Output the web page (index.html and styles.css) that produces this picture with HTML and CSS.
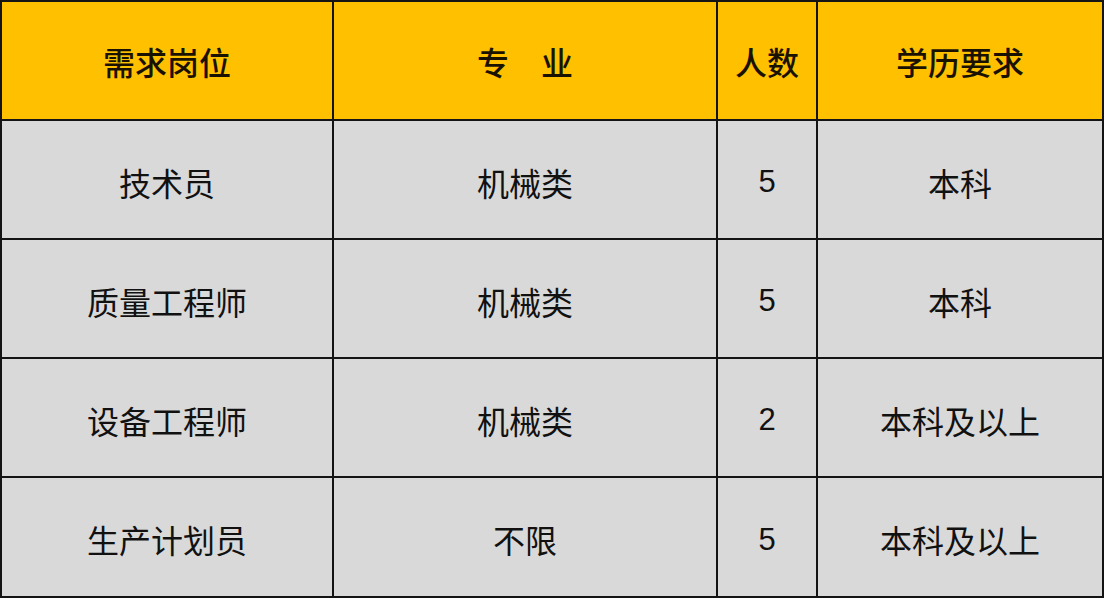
FILE: index.html
```html
<!DOCTYPE html>
<html lang="zh-CN">
<head>
<meta charset="utf-8">
<title>招聘需求</title>
<link rel="stylesheet" href="styles.css">
</head>
<body>
<div class="table">
  <div class="cell head">需求岗位</div>
  <div class="cell head">专　业</div>
  <div class="cell head">人数</div>
  <div class="cell head">学历要求</div>

  <div class="cell">技术员</div>
  <div class="cell">机械类</div>
  <div class="cell num">5</div>
  <div class="cell">本科</div>

  <div class="cell">质量工程师</div>
  <div class="cell">机械类</div>
  <div class="cell num">5</div>
  <div class="cell">本科</div>

  <div class="cell">设备工程师</div>
  <div class="cell">机械类</div>
  <div class="cell num">2</div>
  <div class="cell">本科及以上</div>

  <div class="cell">生产计划员</div>
  <div class="cell">不限</div>
  <div class="cell num">5</div>
  <div class="cell">本科及以上</div>
</div>
</body>
</html>
```
FILE: styles.css
```css
html, body {
  margin: 0;
  padding: 0;
  background: #ffffff;
}
body {
  font-family: "Noto Sans CJK SC", "Noto Sans", sans-serif;
}
.table {
  display: grid;
  width: 1104px;
  box-sizing: border-box;
  grid-template-columns: 330px 382px 98px 284px;
  grid-template-rows: 117px 117px 117px 117px 118px;
  gap: 2px;
  padding: 2px;
  background: #141414;
}
.cell {
  display: flex;
  align-items: center;
  justify-content: center;
  padding-top: 4px;
  background: #d9d9d9;
  color: #111111;
  font-size: 32px;
  line-height: 1;
}
.cell.head {
  padding-top: 0;
  background: #ffc000;
  color: #1a1200;
  font-weight: 500;
}
.cell.num {
  font-family: "Liberation Sans", Arial, sans-serif;
  font-size: 31px;
}
```
